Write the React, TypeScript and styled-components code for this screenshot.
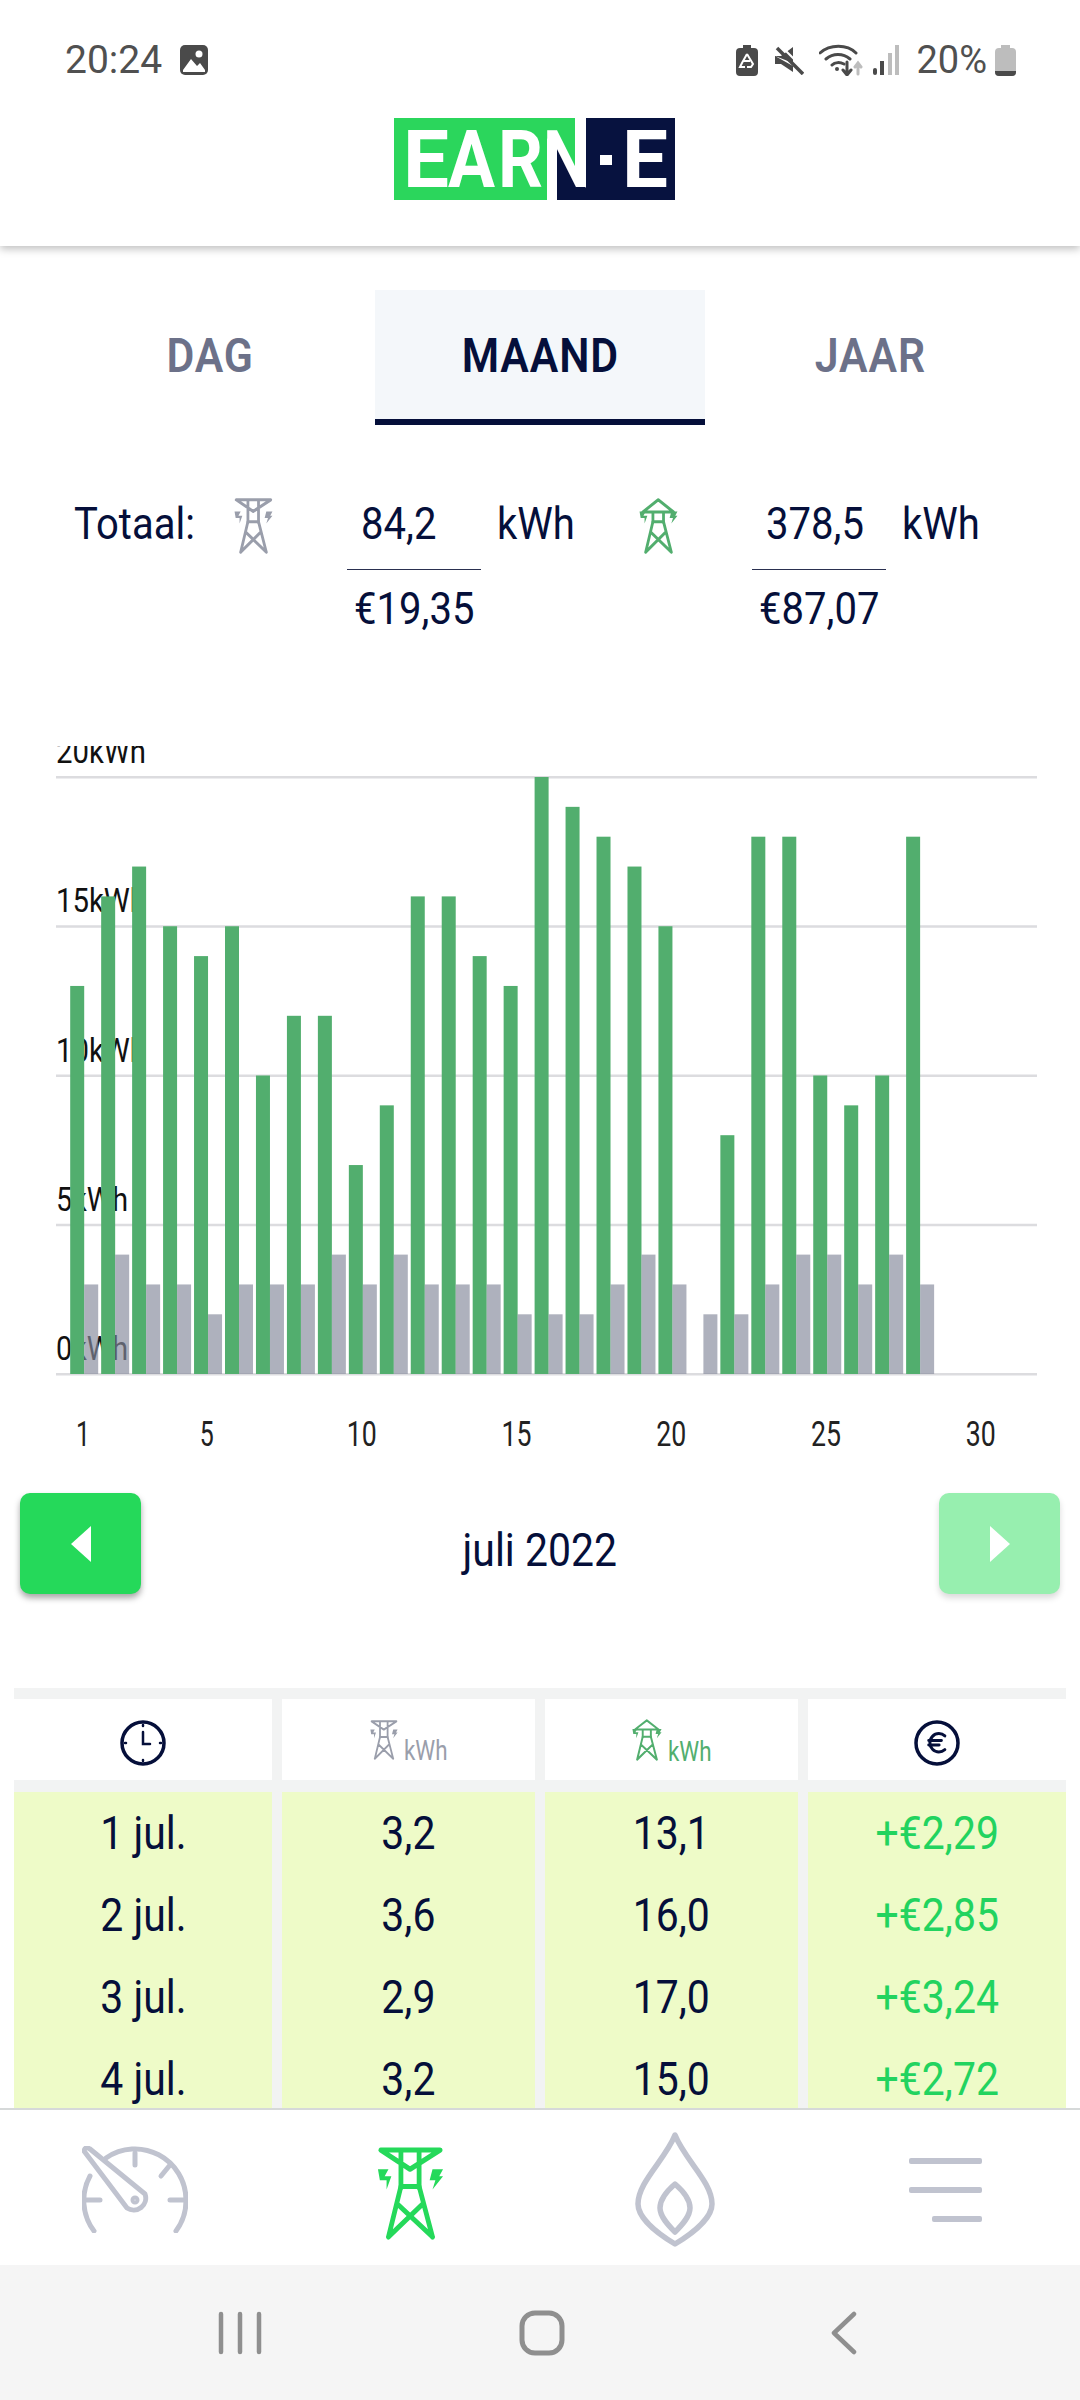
import * as React from 'react'
import styled, { createGlobalStyle, css } from 'styled-components'

const NAVY = '#050f3a'
const GREEN = '#25d95a'
const CHART_GREEN = '#52ae6e'
const MUTED = '#9a9eab'
const NAV_GREY = '#c0c3cf'

const GlobalStyle = createGlobalStyle`
	html, body {
		margin: 0;
		padding: 0;
		background: #fff;
	}
	body {
		font-family: Roboto, "Liberation Sans", sans-serif;
	}
`

// the app font is a condensed one, so squeeze Roboto a bit
const condensed = css`
	display: inline-block;
	transform: scaleX(0.89);
`

const Page = styled.div`
	width: 1080px;
	height: 2400px;
	display: flex;
	flex-direction: column;
	overflow: hidden;
	background: #fff;
`

const Header = styled.header`
	position: relative;
	z-index: 1;
	height: 246px;
	flex: none;
	display: flex;
	flex-direction: column;
	align-items: center;
	background: #fff;
	box-shadow: 0 3px 8px rgba(0, 0, 0, 0.25);
`

const StatusBar = styled.div`
	width: 100%;
	box-sizing: border-box;
	height: 118px;
	padding: 2px 64px 0 65px;
	display: flex;
	align-items: center;
	justify-content: space-between;
	color: #505050;
	font-size: 39px;
`

const StatusGroup = styled.div`
	display: flex;
	align-items: center;
`

const StatusIcon = styled.svg<{ $gap?: number }>`
	display: block;
	margin-left: ${p => p.$gap ?? 0}px;
`

const Percent = styled.span`
	margin-left: 17px;
	font-size: 38px;
`

const Logo = styled.svg`
	display: block;
	margin-left: -11px;
`

const Main = styled.main`
	flex: 1;
	min-height: 0;
	overflow: hidden;
`

const Tabs = styled.div`
	margin: 44px 45px 0;
	display: grid;
	grid-template-columns: repeat(3, 330px);
`

const Tab = styled.div<{ $active?: boolean }>`
	height: 129px;
	display: flex;
	align-items: center;
	justify-content: center;
	border-bottom: 6px solid ${p => (p.$active ? NAVY : 'transparent')};
	background: ${p => (p.$active ? '#f4f7fa' : 'transparent')};
	color: ${p => (p.$active ? NAVY : '#6c7189')};
`

const TabLabel = styled.span`
	${condensed}
	margin-top: 2px;
	font-size: 48px;
	font-weight: 600;
	letter-spacing: 1px;
`

const Totals = styled.div`
	margin-top: 71px;
	height: 142px;
	padding-left: 74px;
	display: grid;
	grid-template-columns: 160px 405px 1fr;
	color: ${NAVY};
	font-size: 45px;
	line-height: 56px;
`

const TotalLabel = styled.span`
	${condensed}
	transform-origin: left;
`

const TotalGroup = styled.div`
	display: flex;
	align-items: flex-start;
`

const Fraction = styled.div`
	width: 134px;
	margin: 0 16px 0 74px;
`

const FractionTop = styled.div`
	height: 56px;
	padding: 0 0 17px 14px;
	border-bottom: 1.5px solid #2a3050;
`

const FractionBottom = styled.div`
	margin-top: 11px;
	padding-left: 7px;
`

const Figure = styled.span`
	${condensed}
	transform-origin: left;
`

const Pylon = styled.svg<{ $tone: string; $top?: number }>`
	display: block;
	flex: none;
	color: ${p => p.$tone};
	margin-top: ${p => p.$top ?? 0}px;
`

const ChartFrame = styled.svg`
	display: block;
	margin-top: 108px;
`

const Pager = styled.div`
	margin-top: 23px;
	padding: 0 20px;
	display: flex;
	align-items: center;
	justify-content: space-between;
`

const PagerButton = styled.div<{ $disabled?: boolean }>`
	width: 121px;
	height: 101px;
	display: flex;
	align-items: center;
	justify-content: center;
	border-radius: 10px;
	background: ${p => (p.$disabled ? '#97efaf' : GREEN)};
	box-shadow: 0 4px 6px rgba(0, 0, 0, ${p => (p.$disabled ? 0.15 : 0.35)});
`

const Arrow = styled.span<{ $right?: boolean }>`
	width: 0;
	height: 0;
	border-top: 18px solid transparent;
	border-bottom: 18px solid transparent;
	${p => (p.$right ? 'border-left: 20px solid #fff;' : 'border-right: 20px solid #fff;')}
`

const PagerTitle = styled.span`
	${condensed}
	padding-top: 12px;
	color: ${NAVY};
	font-size: 46px;
`

const Table = styled.div`
	margin: 94px 14px 0;
	padding-top: 11px;
	display: grid;
	grid-template-columns: 258px 253px 253px 258px;
	column-gap: 10px;
	background: #f2f3f3;
`

const HeadCell = styled.div`
	height: 81px;
	margin-bottom: 12px;
	display: flex;
	align-items: center;
	justify-content: center;
	background: #fff;
`

const RoundIcon = styled.svg`
	display: block;
	margin-top: 6px;
`

const UnitHead = styled.div<{ $tone: string }>`
	display: flex;
	align-items: flex-end;
	gap: 6px;
	color: ${p => p.$tone};
	font-size: 28px;
	line-height: 24px;
`

const UnitLabel = styled.span`
	display: inline-block;
	width: 44px;
	margin-bottom: -3px;
	transform: scaleX(0.8);
	transform-origin: left;
	white-space: nowrap;
`

const Cell = styled.div<{ $money?: boolean }>`
	height: 82px;
	display: flex;
	align-items: center;
	justify-content: center;
	background: #eefbc8;
	color: ${p => (p.$money ? '#22d35f' : NAVY)};
	font-size: 46px;
`

const CellText = styled.span`
	${condensed}
`

const BottomNav = styled.nav`
	flex: none;
	box-sizing: border-box;
	height: 157px;
	padding-top: 4px;
	border-top: 2px solid #d6d9d9;
	display: grid;
	grid-template-columns: repeat(4, 270px);
	align-items: center;
	justify-items: center;
	background: #fff;
`

const NavIcon = styled.svg`
	display: block;
	color: ${NAV_GREY};
`

const NavTower = styled.div`
	margin-left: 10px;
`

const MenuLines = styled.div`
	width: 73px;
	display: flex;
	flex-direction: column;
	align-items: flex-end;
	gap: 23px;
`

const MenuLine = styled.span<{ $short?: boolean }>`
	display: block;
	width: ${p => (p.$short ? 50 : 73)}px;
	height: 6px;
	border-radius: 2px;
	background: ${NAV_GREY};
`

const SystemBar = styled.div`
	flex: none;
	height: 135px;
	padding: 0 85px 0 89px;
	display: grid;
	grid-template-columns: repeat(3, 302px);
	align-items: center;
	justify-items: center;
	background: #f5f5f5;
	color: #8f8f8f;
`

const green = [13, 16, 17, 15, 14, 15, 10, 12, 12, 7, 9, 16, 16, 14, 13, 20, 19, 18, 17, 15, 0, 8, 18, 18, 10, 9, 10, 18]
const grey = [3, 4, 3, 3, 2, 3, 3, 3, 4, 3, 4, 3, 3, 3, 2, 2, 2, 3, 4, 3, 2, 2, 3, 4, 4, 3, 4, 3]
const yTicks = [20, 15, 10, 5, 0]
const xTicks = [1, 5, 10, 15, 20, 25, 30]

const rows = [
	['1 jul.', '3,2', '13,1', '+€2,29'],
	['2 jul.', '3,6', '16,0', '+€2,85'],
	['3 jul.', '2,9', '17,0', '+€3,24'],
	['4 jul.', '3,2', '15,0', '+€2,72'],
]

const BASE_Y = 1374
const PER_KWH = 29.85
const STEP = 30.96

const Tower = (p: { w: number; h: number; tone: string; peak?: boolean; top?: number; sw?: number }) => (
	<Pylon
		width={p.w}
		height={p.h}
		$tone={p.tone}
		$top={p.top}
		viewBox="-2 0 70 92"
		preserveAspectRatio="none"
		fill="none"
		stroke="currentColor"
		strokeWidth={p.sw ?? 4.5}
		strokeLinecap="round"
		strokeLinejoin="round"
	>
		{p.peak ? (
			<path d="M32.5 3 5 23H60ZM23 23V40M42 23V40" />
		) : (
			<path d="M2 3H64L32.5 22 2 3ZM23 3V40M42 3V40" />
		)}
		<path d="M23 39H42M23 39 10 89M42 39 56 89M20 57 56 89M45 57 10 89" />
		<path
			fill="currentColor"
			stroke="none"
			d="M-1 22H10L6 29H13L8 42V33H1ZM56 22H67L63 29H67L56 42 59 33H53Z"
		/>
	</Pylon>
)

const Chart = () => (
	<ChartFrame width={1080} height={724} viewBox="0 746 1080 724">
		{yTicks.map(v => (
			<text
				key={v}
				x={56}
				y={BASE_Y - v * PER_KWH - 14}
				fontFamily="Roboto"
				fontSize={33}
				fill="#111"
				textLength={v >= 10 ? 90 : 72}
				lengthAdjust="spacingAndGlyphs"
			>
				{v}kWh
			</text>
		))}
		{yTicks.map(v => (
			<rect key={v} x={56} y={BASE_Y - v * PER_KWH - 1} width={981} height={2.5} fill="#dcdcdf" />
		))}
		{green.map((v, i) => (
			<rect
				key={i}
				x={70.2 + i * STEP}
				y={BASE_Y - v * PER_KWH}
				width={14}
				height={v * PER_KWH}
				fill={CHART_GREEN}
			/>
		))}
		{grey.map((v, i) => (
			<rect
				key={i}
				x={84.2 + i * STEP}
				y={BASE_Y - v * PER_KWH}
				width={14}
				height={v * PER_KWH}
				fill="#868a9c"
				fillOpacity={0.67}
			/>
		))}
		{xTicks.map(d => (
			<text
				key={d}
				x={83 + (d - 1) * STEP - (d >= 10 ? 15 : 7)}
				y={1446}
				fontFamily="Roboto"
				fontSize={35}
				fill="#222"
				textLength={d >= 10 ? 30 : 14}
				lengthAdjust="spacingAndGlyphs"
			>
				{d}
			</text>
		))}
	</ChartFrame>
)

const LogoMark = () => (
	<Logo width={281} height={82} viewBox="0 0 281 82">
		<polygon points="0,0 181,0 181,60 153,20 153,82 0,82" fill="#2bd65c" />
		<polygon points="192,0 281,0 281,82 163,82 163,30 192,70" fill="#07123f" />
		<g fill="#fff" fontFamily="Roboto, sans-serif" fontWeight={700} fontSize={79}>
			<text x={9} y={69} textLength={46} lengthAdjust="spacingAndGlyphs">E</text>
			<text x={54} y={69} textLength={47} lengthAdjust="spacingAndGlyphs">A</text>
			<text x={104} y={69} textLength={45} lengthAdjust="spacingAndGlyphs">R</text>
			<text x={149} y={69} textLength={47} lengthAdjust="spacingAndGlyphs">N</text>
			<text x={228} y={69} textLength={46} lengthAdjust="spacingAndGlyphs">E</text>
		</g>
		<rect x={206} y={37} width={12} height={10} fill="#fff" />
	</Logo>
)

const ClockIcon = () => (
	<RoundIcon width={46} height={46} viewBox="0 0 46 46" fill="none" stroke={NAVY} strokeLinecap="round">
		<circle cx={23} cy={23} r={21} strokeWidth={3.5} />
		<path d="M23 12V24H30" strokeWidth={2.5} />
		<path d="M23 5V6M23 40V41M5 23H6M40 23H41" strokeWidth={2.5} />
	</RoundIcon>
)

const EuroIcon = () => (
	<RoundIcon width={46} height={46} viewBox="0 0 46 46" fill="none" stroke={NAVY} strokeLinecap="round">
		<circle cx={23} cy={23} r={21} strokeWidth={3.5} />
		<g transform="translate(9 9) scale(1.15)" strokeWidth={2.6}>
			<path d="M5 10h11M5 14h9M19 6a7.7 7.7 0 0 0-5.2-2A7.9 7.9 0 0 0 6 12c0 4.4 3.5 8 7.8 8 2 0 3.8-.8 5.2-2" />
		</g>
	</RoundIcon>
)

export default function App() {
	return (
		<Page>
			<GlobalStyle />
			<Header>
				<StatusBar>
					<StatusGroup>
						<span>20:24</span>
						<StatusIcon $gap={18} width={28} height={30} viewBox="0 0 28 30">
							<rect width={28} height={30} rx={5} fill="#4a4a4a" />
							<path d="M3 25 11 14l6 7 3-3 5 7v2H3Z" fill="#fff" />
							<circle cx={19} cy={9} r={3.5} fill="#fff" />
						</StatusIcon>
					</StatusGroup>
					<StatusGroup>
						<StatusIcon width={22} height={31} viewBox="0 0 22 31">
							<path d="M7 0h8v3h3a4 4 0 0 1 4 4v20a4 4 0 0 1-4 4H4a4 4 0 0 1-4-4V7a4 4 0 0 1 4-4h3Z" fill="#4a4a4a" />
							<path d="M11 9 6 18l-2 4h5M11 9l6 10-2 3h-4M8 16h6" fill="none" stroke="#fff" strokeWidth={2} />
						</StatusIcon>
						<StatusIcon $gap={17} width={29} height={30} viewBox="0 0 29 30">
							<path d="M0 11h6l12-9v16ZM0 11v8h6l12 8v-6Z" fill="#4a4a4a" />
							<path d="M2 3 28 29" stroke="#4a4a4a" strokeWidth={3.5} />
							<path d="M6 1 30 25" stroke="#fff" strokeWidth={2} />
						</StatusIcon>
						<StatusIcon $gap={15} width={44} height={32} viewBox="0 0 44 32" fill="none" stroke="#4a4a4a" strokeWidth={3} strokeLinecap="round">
							<path d="M1 9C11 0 28 0 37 9M7 15C14 9 24 9 31 15M13 21C16 18 21 18 25 20" />
							<circle cx={18} cy={25} r={2} fill="#4a4a4a" stroke="none" />
							<path d="M28 18V30M24 26 28 31 32 26" />
							<path d="M39 30V20M36 23 39 19 42 23" stroke="#bdbdbd" />
						</StatusIcon>
						<StatusIcon $gap={10} width={26} height={30} viewBox="0 0 26 30">
							<rect x={0} y={23} width={4} height={7} rx={2} fill="#4a4a4a" />
							<rect x={7} y={16} width={4} height={14} fill="#4a4a4a" />
							<rect x={15} y={8} width={4} height={22} fill="#bdbdbd" />
							<rect x={22} y={0} width={4} height={30} fill="#bdbdbd" />
						</StatusIcon>
						<Percent>20%</Percent>
						<StatusIcon $gap={8} width={21} height={31} viewBox="0 0 21 31">
							<path d="M6 0h9v3h2a4 4 0 0 1 4 4v20a4 4 0 0 1-4 4H4a4 4 0 0 1-4-4V7a4 4 0 0 1 4-4h2Z" fill="#bdbdbd" />
							<path d="M0 26h21v1a4 4 0 0 1-4 4H4a4 4 0 0 1-4-4Z" fill="#4a4a4a" />
						</StatusIcon>
					</StatusGroup>
				</StatusBar>
				<LogoMark />
			</Header>

			<Main>
				<Tabs>
					<Tab><TabLabel>DAG</TabLabel></Tab>
					<Tab $active><TabLabel>MAAND</TabLabel></Tab>
					<Tab><TabLabel>JAAR</TabLabel></Tab>
				</Tabs>

				<Totals>
					<div><TotalLabel>Totaal:</TotalLabel></div>
					<TotalGroup>
						<Tower w={39} h={56} tone={MUTED} top={2} sw={5} />
						<Fraction>
							<FractionTop><Figure>84,2</Figure></FractionTop>
							<FractionBottom><Figure>€19,35</Figure></FractionBottom>
						</Fraction>
						<Figure>kWh</Figure>
					</TotalGroup>
					<TotalGroup>
						<Tower w={39} h={56} tone={CHART_GREEN} top={2} sw={5} peak />
						<Fraction>
							<FractionTop><Figure>378,5</Figure></FractionTop>
							<FractionBottom><Figure>€87,07</Figure></FractionBottom>
						</Fraction>
						<Figure>kWh</Figure>
					</TotalGroup>
				</Totals>

				<Chart />

				<Pager>
					<PagerButton><Arrow /></PagerButton>
					<PagerTitle>juli 2022</PagerTitle>
					<PagerButton $disabled><Arrow $right /></PagerButton>
				</Pager>

				<Table>
					<HeadCell><ClockIcon /></HeadCell>
					<HeadCell>
						<UnitHead $tone={MUTED}>
							<Tower w={28} h={40} tone={MUTED} sw={4.5} />
							<UnitLabel>kWh</UnitLabel>
						</UnitHead>
					</HeadCell>
					<HeadCell>
						<UnitHead $tone={CHART_GREEN}>
							<Tower w={30} h={42} tone={CHART_GREEN} sw={4.5} peak />
							<UnitLabel>kWh</UnitLabel>
						</UnitHead>
					</HeadCell>
					<HeadCell><EuroIcon /></HeadCell>
					{rows.map(row =>
						row.map((text, i) => (
							<Cell key={row[0] + i} $money={i === 3}>
								<CellText>{text}</CellText>
							</Cell>
						)),
					)}
				</Table>
			</Main>

			<BottomNav>
				<NavIcon width={106} height={87} viewBox="0 0 106 87" fill="none" stroke="currentColor" strokeWidth={5} strokeLinecap="round" strokeLinejoin="round">
					<path d="M12 85A51 51 0 0 1 8 30M24 12A51 51 0 0 1 104 54A51 51 0 0 1 94 85" />
					<path d="M53 7V19M88 19 79 30M88 54H103M3 54H18" />
					<path d="M2 5 45 62A12 12 0 0 0 63 48L8 3Q3 0 2 5Z" fill="#fff" />
					<circle cx={53} cy={54} r={2} />
				</NavIcon>
				<NavTower>
					<Tower w={67} h={93} tone={GREEN} top={8} sw={5} />
				</NavTower>
				<NavIcon width={80} height={115} viewBox="0 0 80 115" fill="none" stroke="currentColor" strokeWidth={5.5} strokeLinejoin="round">
					<path d="M40 3C30 28 3 50 3 72 3 85 20 100 40 112 60 100 77 85 77 72 77 50 50 28 40 3Z" />
					<path d="M40 52C33 58 25 66 25 76 25 85 34 94 40 100 46 94 55 85 55 76 55 66 47 58 40 52Z" />
				</NavIcon>
				<MenuLines>
					<MenuLine />
					<MenuLine />
					<MenuLine $short />
				</MenuLines>
			</BottomNav>

			<SystemBar>
				<svg width={44} height={44} viewBox="0 0 44 44" stroke="currentColor" strokeWidth={4.5} strokeLinecap="round">
					<path d="M3 3V41M22 3V41M41 3V41" />
				</svg>
				<svg width={46} height={46} viewBox="0 0 46 46" fill="none" stroke="currentColor" strokeWidth={5}>
					<rect x={3} y={3} width={40} height={40} rx={13} />
				</svg>
				<svg width={26} height={44} viewBox="0 0 26 44" fill="none" stroke="currentColor" strokeWidth={4.5} strokeLinecap="round" strokeLinejoin="round">
					<path d="M23 3 3 22 23 41" />
				</svg>
			</SystemBar>
		</Page>
	)
}
